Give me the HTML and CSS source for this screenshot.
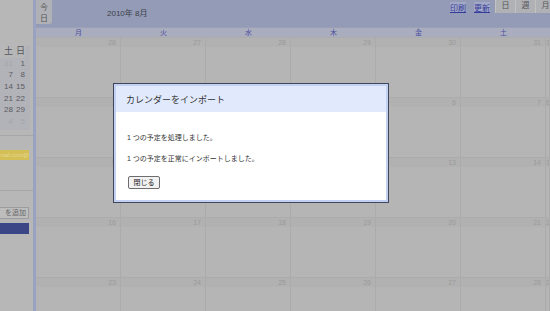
FILE: index.html
```html
<!DOCTYPE html>
<html lang="ja">
<head>
  <meta charset="UTF-8" />
  <title>カレンダー</title>
  <link rel="stylesheet" href="styles.css">
</head>
<body>

  <!-- Sidebar -->
  <aside id="sidebar">
    <div class="minical">
      <span class="dow">土</span><span class="dow">日</span>
      <span class="off">31</span><span>1</span>
      <span>7</span><span>8</span>
      <span>14</span><span>15</span>
      <span>21</span><span>22</span>
      <span>28</span><span>29</span>
      <span class="off">4</span><span class="off">5</span>
    </div>
    <div class="side-rule"></div>
    <div class="cal-chip">@gmail.com</div>
    <div class="side-rule low"></div>
    <div class="add-box">を追加</div>
    <div class="add-btn"></div>
  </aside>
  <div id="divider"></div>

  <div id="main">
    <!-- Header -->
    <div id="topbar">
      <button class="today">今<br>日</button>
      <span class="month">2010年 8月</span>
      <div class="links">
        <a href="#">印刷</a>
        <a href="#">更新</a>
      </div>
      <div class="tabs">
        <span>日</span><span>週</span><span>月</span>
      </div>
    </div>

    <div class="dow-row">
      <span>月</span><span>火</span><span>水</span><span>木</span><span>金</span><span>土</span><span></span>
    </div>

    <div id="grid"></div>
  </div>

  <!-- Import dialog -->
  <div class="dialog">
    <div class="dialog-title">カレンダーをインポート</div>
    <div class="dialog-body">
      <p>1 つの予定を処理しました。</p>
      <p>1 つの予定を正常にインポートしました。</p>
      <button class="close-btn">閉じる</button>
    </div>
  </div>

  <script>
    const weeks = [
      [26, 27, 28, 29, 30, 31, 1],
      [2, 3, 4, 5, 6, 7, 8],
      [9, 10, 11, 12, 13, 14, 15],
      [16, 17, 18, 19, 20, 21, 22],
      [23, 24, 25, 26, 27, 28, 29]
    ];
    const grid = document.getElementById('grid');
    weeks.forEach(w => {
      const row = document.createElement('div');
      row.className = 'week';
      row.innerHTML = w.map(d => `<div class="cell"><div class="num">${d}</div></div>`).join('');
      grid.appendChild(row);
    });
  </script>
</body>
</html>
```

FILE: styles.css
```css
/* Reset */
*, *::before, *::after { margin:0; padding:0; box-sizing:border-box; }
body {
  font-family: "Liberation Sans", "Noto Sans CJK JP", sans-serif;
  background: #b5b5b5; color: #333;
  width: 550px; height: 311px; overflow: hidden;
  display: flex; position: relative;
}

/* Sidebar */
#sidebar { width: 33px; flex: none; background: #b7b7b8; padding-top: 46px; overflow: hidden; }
.minical {
  display: grid; grid-template-columns: 13px 12px; grid-auto-rows: 11.7px;
  font-size: 8px; color: #5a5a5e; background: #b2b3b9; width: 30px; padding-bottom: 2px;
}
.minical span { text-align: right; line-height: 11.7px; }
.minical .dow { color: #55585e; background: #b7b7b8; font-size: 9px; }
.minical .off { color: #a4a5ab; }
.side-rule { height: 1px; background: #a6a6a8; margin-top: 5px; }
.side-rule.low { margin-top: 30px; }
.cal-chip {
  margin-top: 14px; height: 10px; width: 29px; background: #d3bf55;
  font-size: 6px; line-height: 10px; color: #e6d996; white-space: nowrap;
  direction: rtl; overflow: hidden;
}
.add-box {
  margin-top: 16px; height: 12px; width: 29px; border: 1px solid #9c9c9c; border-left: none;
  background: #bdbdbd; font-size: 7px; line-height: 10px; color: #666;
  direction: rtl; overflow: hidden; white-space: nowrap; padding-right: 2px;
}
.add-btn { margin-top: 4px; height: 11px; width: 29px; background: #3b4686; }

#divider { width: 3px; flex: none; background: #9aa2c2; }

/* Main */
#main { flex: 1; min-width: 0; overflow: hidden; display: flex; flex-direction: column; background: #b5b5b5; }
#topbar {
  height: 27px; flex: none; background: #939bb6; display: flex; align-items: flex-start;
}
.today {
  width: 16px; height: 24px; border: none; border-radius: 0 0 3px 0;
  background: #b0b1b6; color: #555; font-family: inherit; font-size: 8px; line-height: 11px;
  padding-top: 1px;
}
.month { margin: 7px 0 0 55px; font-size: 8px; color: #3d3f4a; }
.links { margin-left: auto; margin-top: 2px; display: flex; gap: 8px; font-size: 8px; }
.links a { color: #333c9a; background: #a3a8c6; }
.tabs { display: flex; flex: none; margin-left: 5px; margin-right: -5px; }
.tabs span {
  width: 20px; height: 13px; background: #b0b1b5; border-left: 1px solid #c2c2c2;
  font-size: 8px; line-height: 12px; text-align: center; color: #555;
}

.dow-row {
  height: 10px; flex: none; display: grid; grid-template-columns: repeat(6, 85px) minmax(0, 1fr);
  background: #a9adbd; border-top: 1px solid #9ba0b6;
}
.dow-row span { font-size: 7px; line-height: 9px; text-align: center; color: #4d51a0; }

#grid { flex: 1; display: flex; flex-direction: column; }
.week { height: 60px; flex: none; display: grid; grid-template-columns: repeat(6, 85px) minmax(0, 1fr); }
.cell { border-right: 1px solid #ababab; border-top: 1px solid #acacac; overflow: hidden; }
.cell .num {
  height: 9px; background: #b1b1b1; font-size: 7px; line-height: 9px;
  text-align: right; padding-right: 4px; color: #9a9a9a;
}

/* Dialog */
.dialog {
  position: absolute; left: 113px; top: 83px; width: 276px; height: 120px;
  border: 1px solid #40475c; background: #fff;
  box-shadow: inset 0 0 0 2px #c4d0f2;
  padding: 2px;
}
.dialog-title {
  height: 26px; background: #e1e9fc; font-size: 9px; line-height: 28px;
  padding-left: 10px; color: #333;
}
.dialog-body { padding: 21px 0 0 11px; font-size: 7px; color: #333; }
.dialog-body p { line-height: 10px; margin-bottom: 11px; }
.close-btn {
  margin-top: 1px; margin-left: 1px; width: 32px; height: 13px; font-family: inherit; font-size: 7px;
  background: #f2f2f2; border: 1px solid #6d6d6d; border-radius: 2px; color: #222;
  line-height: 11px;
}
```
